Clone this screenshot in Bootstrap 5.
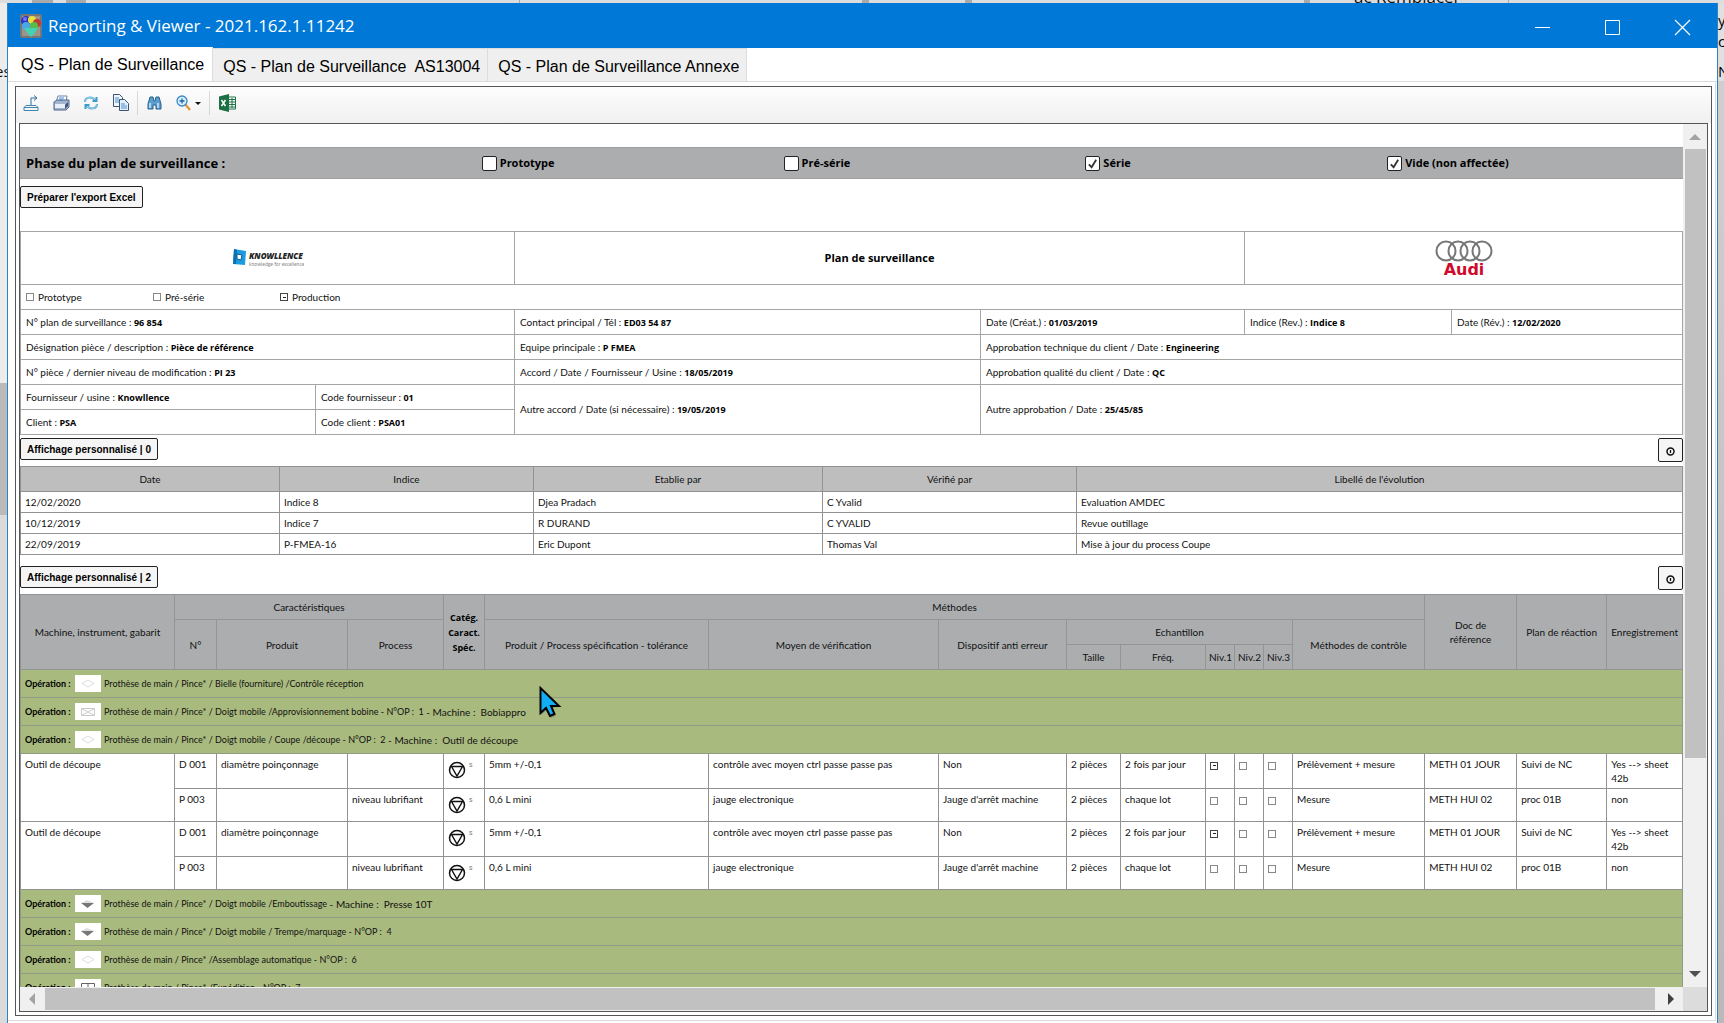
<!DOCTYPE html>
<html lang="fr">
<head>
<meta charset="utf-8">
<meta name="viewport" content="width=device-width, initial-scale=1">
<title>Reporting &amp; Viewer - 2021.162.1.11242</title>
<link href="https://cdn.jsdelivr.net/npm/bootstrap@5.3.0/dist/css/bootstrap.min.css" rel="stylesheet">
<style>
body{font-family:Lato,"Open Sans",sans-serif;font-size:10px;line-height:14px;color:#111;background:#d9d9d9}
button{color:inherit}
.backdrop{inset:0;background:linear-gradient(#dcdcdc 0 3px,#ececec 3px 383px,#bababa 383px 515px,#dadada 515px);font:15px/18px "Open Sans",sans-serif}
.backdrop i{width:12px;height:3px;background:#aaa;top:0}
.backdrop .right-edge{right:0;top:3px;bottom:0;width:6px;background:linear-gradient(#e0e0e0 0 78px,#cfcfcf 78px 110px,#b9b9b9)}
.right-edge div:nth-child(1){padding-top:8px}
.right-edge div:nth-child(2){padding-top:3px}
.right-edge div:nth-child(3){padding-top:12px}
.peek{white-space:nowrap;overflow:hidden}
.peek-top{left:1354px;top:0;width:110px;height:3px;font-size:17px;line-height:12px}
.peek-left{left:-5px;top:62px;width:12px}
.app-window{height:calc(100vh - 3px);margin:3px 6px 0 7px;border:1px solid #2f83c4;border-width:0 1px}
.titlebar{height:45px;background:#0078d7;font:17px/22px "Open Sans",sans-serif}
.titlebar button{width:70px;height:45px}
.tabstrip{height:34px;font:16px/20px "Liberation Sans",Arial,sans-serif;border-bottom:1px solid #dcdcdc}
.tabstrip a{color:#000;text-decoration:none;height:33px;padding:8px 7px 0 10px;background:#efefef;border:1px solid #dcdcdc;border-width:1px 1px 0 0;white-space:pre}
.tabstrip a.active{background:#fff;height:34px;padding:7px 8px 0 13px;border-top-color:#fff}
.tab-body{padding:4px 3px 4px 7px;margin-right:1px;border-right:1px solid #ddd;border-bottom:1px solid #ddd;margin-bottom:2px;min-height:0}
.viewer{border:1px solid #555;padding:0 3px 3px;min-height:0}
.toolbar{height:37px;margin:0 -3px;padding:0 7px 5px;background:linear-gradient(#fdfdfd,#f0f0f0)}
.toolbar button{height:24px;margin-right:14px}
.toolbar .vr{height:24px;align-self:center;color:#777;margin-right:9px}
.toolbar .last-in-group{margin-right:8px}
.pane{border:1px solid #555;display:grid;grid-template:minmax(0,1fr) 24px / minmax(0,1fr) 24px;min-height:0}
.report{overflow:hidden;padding-top:23px}
.track{background:#f0f0f0}
.thumb{background:#c1c1c1}
.vthumb{flex:0 0 70.5%;margin:0 1px 0 2px}
.hthumb{margin:1px 3px 1px 0}
.corner{background:#dcdcdc}
.phase{display:grid;grid-template-columns:456fr 302fr 302fr 302fr 302fr;height:32px;background:#abadaf;border:1px solid #9d9ea0;border-width:1px 0;font:bold 11px/16px "Open Sans",sans-serif;color:#000}
.phase strong{font-size:13px;font-weight:700;padding-left:6px}
.phase label{gap:3px;padding-left:6px}
.tick{appearance:none;margin:0;width:15px;height:15px;border:1px solid #222;border-radius:2px;background:#fff center/11px no-repeat}
.tick:checked{background-image:url("data:image/svg+xml,%3Csvg xmlns='http://www.w3.org/2000/svg' viewBox='0 0 12 12'%3E%3Cpath d='M2 7l3 3 5-8' fill='none' stroke='%23333' stroke-width='2'/%3E%3C/svg%3E")}
.mini{appearance:none;margin:0;width:8px;height:8px;border:1px solid #888;background:#fff center/5px no-repeat;vertical-align:middle}
.mini:checked{border-color:#444;background-image:url("data:image/svg+xml,%3Csvg xmlns='http://www.w3.org/2000/svg' viewBox='0 0 5 5'%3E%3Cpath d='M1 2.5h3' stroke='%23222'/%3E%3C/svg%3E")}
.cmd{border:1px solid #222;border-radius:2px;background:#f5f5f5;font:bold 10px/14px "Liberation Sans",Arial,sans-serif;height:22px;padding:1px 6px 0;color:#000}
.cmd.eye{width:25px;height:24px;padding:2px 0 0}
.export-row{margin:7px 0 23px}
.history-bar{margin:3px 0 4px}
.plan-bar{margin:11px 0 4px}
.grid{width:calc(100% - 1px);table-layout:fixed;border-collapse:collapse;color:#111}
.grid td,.grid th{border:1px solid #929292;height:25px;padding:0 5px;font-weight:400}
.grid b{font:bold 9px/14px "Open Sans",sans-serif;color:#000}
.ident td{border-color:#a5a5a5}
.ident .logos td{height:53px}
.ident .check-item{width:127px}
.grid .sheet-title{font:bold 11px/16px "Open Sans",sans-serif;color:#000}
.history th{background:#bebebe;text-align:center}
.history td{height:21px;padding:0 4px}
.plan th{background:#abadaf;border-color:#939496;text-align:center;padding:0 3px}
.plan td{vertical-align:top;padding:3px 4px;height:33px}
.plan .two td{height:35px}
.plan .op td{height:28px;background:#a9ba7f;border-color:#8f9b83;padding:0 4px;vertical-align:middle}
.grid .op b{width:50px;flex:none;font:bold 9px/14px Lato,sans-serif}
.op svg{background:#fff;margin-right:3px}
.op .path{font-size:9px}
.sup{font:7px/8px "Liberation Sans",sans-serif;color:#777;margin-left:3px}
.ident col:nth-child(1){width:295px}.ident col:nth-child(2){width:199px}.ident col:nth-child(3){width:466px}.ident col:nth-child(4){width:264px}.ident col:nth-child(5){width:207px}.ident col:nth-child(6){width:231px}
.history col:nth-child(1){width:259px}.history col:nth-child(2){width:254px}.history col:nth-child(3){width:289px}.history col:nth-child(4){width:254px}.history col:nth-child(5){width:606px}
.plan col:nth-child(1){width:154px}.plan col:nth-child(2){width:42px}.plan col:nth-child(3){width:131px}.plan col:nth-child(4){width:96px}.plan col:nth-child(5){width:41px}.plan col:nth-child(6){width:224px}.plan col:nth-child(7){width:230px}.plan col:nth-child(8){width:128px}.plan col:nth-child(9){width:54px}.plan col:nth-child(10){width:85px}.plan col:nth-child(11),.plan col:nth-child(12),.plan col:nth-child(13){width:29px}.plan col:nth-child(14){width:132px}.plan col:nth-child(15){width:92px}.plan col:nth-child(16){width:90px}.plan col:nth-child(17){width:76px}
.pointer{left:538px;top:686px}
</style>
<script src="https://cdn.jsdelivr.net/npm/bootstrap@5.3.0/dist/js/bootstrap.bundle.min.js"></script>
</head>
<body class="vh-100 overflow-hidden position-relative">
<svg class="d-none">
<symbol id="diamond" viewBox="0 0 26 17"><path d="M7 8.500L13 5l6 3.500L13 12z" fill="none" stroke="#ddd"/></symbol>
<symbol id="envelope" viewBox="0 0 26 17"><path d="M6.500 5.500h13v7h-13zL19.500 12.500M19.500 5.500l-13 7" fill="none" stroke="#ccc"/></symbol>
<symbol id="gem" viewBox="0 0 26 17"><path d="M6 8l6-3 7 3z" fill="#ddd"/><path d="M6 8h13l-6.500 5z" fill="#777"/></symbol>
<symbol id="crate" viewBox="0 0 26 17"><path d="M6.500 14V4.500h13V14M13 4.500V9" fill="none" stroke="#666"/></symbol>
<symbol id="safety" viewBox="0 0 18 18"><circle cx="9" cy="9" r="7.500" fill="none" stroke="#111" stroke-width="1.500"/><path d="M3.500 5.500h11L9 15z" fill="none" stroke="#111" stroke-width="1.400"/></symbol>
<symbol id="eye" viewBox="0 0 9 9"><path d="M4.500 1C2.500 1 1 2.700 1 4.500S2.500 8 4.500 8 8 6.300 8 4.500 6.500 1 4.500 1z" fill="none" stroke="#111" stroke-width="1.500"/><path d="M4.500 3v3" stroke="#111" stroke-width="1.300"/></symbol>
</svg>

<div class="backdrop position-absolute overflow-hidden" aria-hidden="true">
  <i class="position-absolute" style="left:32px;width:21px"></i><i class="position-absolute" style="left:66px;width:20px"></i><i class="position-absolute" style="left:519px;width:1px"></i><i class="position-absolute" style="left:862px;width:7px"></i><i class="position-absolute" style="left:965px;width:7px"></i><i class="position-absolute" style="left:1304px;width:6px"></i><i class="position-absolute" style="left:1508px;width:1px"></i>
  <div class="peek peek-top position-absolute d-flex align-items-end"><span>ac Remplacer</span></div>
  <div class="peek peek-left position-absolute">es</div>
  <div class="right-edge position-absolute overflow-hidden text-black"><div>y</div><div>c</div><div>N</div></div>
</div>

<div class="app-window position-relative d-flex flex-column bg-white">
  <header class="titlebar d-flex align-items-center text-white">
    <svg class="ms-2 me-1" width="28" height="28" viewBox="0 0 28 28"><rect x="4" y="2" width="22" height="24" rx="2" fill="#777"/><rect x="6" y="4" width="18" height="20" fill="#9a948c"/><circle cx="10" cy="9" r="5" fill="#2636c9"/><circle cx="16" cy="8" r="4" fill="#e8e13b"/><circle cx="21" cy="11" r="4" fill="#c23a35"/><circle cx="10" cy="14" r="4" fill="#48a8e8"/><circle cx="18" cy="14" r="4" fill="#58bb4b"/><path d="M8 16h14l-4 6-3 3-3-3z" fill="#42d4b2"/><circle cx="9" cy="7" r="2" fill="#7e6df0"/></svg>
    <span class="me-auto">Reporting &amp; Viewer - 2021.162.1.11242</span>
    <button type="button" class="btn p-0 border-0 rounded-0" aria-label="Réduire"><svg width="17" height="17"><path d="M1 8.500h15" stroke="#fff"/></svg></button>
    <button type="button" class="btn p-0 border-0 rounded-0" aria-label="Agrandir"><svg width="17" height="17"><path d="M1.500 1.500h14v14h-14z" fill="none" stroke="#fff"/></svg></button>
    <button type="button" class="btn p-0 border-0 rounded-0" aria-label="Fermer"><svg width="17" height="17"><path d="M1 1l15 15M16 1L1 16" stroke="#fff" stroke-width="1.200"/></svg></button>
  </header>
  <nav class="tabstrip d-flex align-items-end">
    <a href="#" class="active">QS - Plan de Surveillance</a><a href="#">QS - Plan de Surveillance  AS13004</a><a href="#">QS - Plan de Surveillance Annexe</a>
  </nav>
  <main class="tab-body flex-grow-1 d-flex flex-column">
    <div class="viewer flex-grow-1 d-flex flex-column">
      <div class="toolbar d-flex align-items-center" role="toolbar">
        <button type="button" class="btn p-0 border-0 d-flex align-items-center" aria-label="Exporter"><svg width="16" height="18" fill="none"><path d="M1 16.500h14v-3l-2-2H3l-2 2zM1 13.500h14" stroke="#3f86b5"/><path d="M8 11V4h5M11 1.500L14 4l-3 2.500" stroke="#2d709f"/></svg></button>
        <button type="button" class="btn p-0 border-0 d-flex align-items-center" aria-label="Imprimer"><svg width="17" height="18"><path d="M5 2h9l-1 6H3z" fill="#fff" stroke="#6c87a5"/><path d="M1 8l3-2h12v7l-3 3H1z" fill="#a3b6cc" stroke="#50698a"/><path d="M2 10h10v4H2z" fill="#e8eff7"/><path d="M6 4h5M6 6h4" stroke="#4585cc"/><path d="M12 11v4l3-3V8z" fill="#3c577b"/></svg></button>
        <button type="button" class="btn p-0 border-0 d-flex align-items-center" aria-label="Actualiser"><svg width="14" height="16" fill="none" stroke="#3a9bcc" stroke-width="2"><path d="M1 7c0-5 7-6 10-2M12.500 2v4h-4M13 9c0 5-7 6-10 2M1.500 14v-4h4"/><path d="M1 7c0-5 7-6 10-2M13 9c0 5-7 6-10 2" stroke="#bfe6f7" stroke-width=".8"/></svg></button>
        <button type="button" class="btn p-0 border-0 d-flex align-items-center last-in-group" aria-label="Copier"><svg width="17" height="19"><path d="M1.500 1.500h6l3 3v9h-9z" fill="#eef5fb" stroke="#3e5570"/><path d="M3 5h4M3 7h6M3 9h6" stroke="#4b8fd0"/><path d="M7.500 6.500h5l4 4v7h-9z" fill="#e3f0fb" stroke="#3e5570"/><path d="M9 11h4M9 13h6M9 15h6" stroke="#4b8fd0"/></svg></button>
        <span class="vr"></span>
        <button type="button" class="btn p-0 border-0 d-flex align-items-center" aria-label="Rechercher"><svg width="15" height="15"><path d="M1 14V9l2-7h3l1 4h1l1-4h3l2 7v5H9v-4H6v4z" fill="#5b9fce" stroke="#27618e"/><path d="M3 8v5M11 8v5" stroke="#cfe6f6" stroke-width="1.500"/></svg></button>
        <button type="button" class="btn p-0 border-0 d-flex align-items-center last-in-group" aria-label="Zoom"><svg width="25" height="18"><path d="M9 10l5 6" stroke="#e39a3e" stroke-width="2.500"/><circle cx="6" cy="7" r="5" fill="#d8effc" stroke="#3988c0" stroke-width="1.300"/><path d="M3.500 7h5M6 4.500v5" stroke="#1c63a8" stroke-width="1.300"/><path d="M19 8h6l-3 3z" fill="#111"/></svg></button>
        <span class="vr"></span>
        <button type="button" class="btn p-0 border-0 d-flex align-items-center" aria-label="Excel"><svg width="17" height="18"><path d="M9 3h7.500v12H9z" fill="#fff" stroke="#217346"/><path d="M10 5.500h6M10 8h6M10 10.500h6M10 13h6M13 4v10" stroke="#217346"/><path d="M0 2.500L10 0v18L0 15.500z" fill="#1c7044"/><path d="M2.500 6l4 6M6.500 6l-4 6" stroke="#fff" stroke-width="1.500"/></svg></button>
      </div>

      <div class="pane flex-grow-1">
        <section class="report">
          <div class="phase align-items-center">
            <strong>Phase du plan de surveillance :</strong>
            <label class="d-flex align-items-center"><input type="checkbox" class="tick">Prototype</label>
            <label class="d-flex align-items-center"><input type="checkbox" class="tick">Pré-série</label>
            <label class="d-flex align-items-center"><input type="checkbox" class="tick" checked>Série</label>
            <label class="d-flex align-items-center"><input type="checkbox" class="tick" checked>Vide (non affectée)</label>
          </div>
          <div class="export-row d-flex"><button type="button" class="cmd">Préparer l'export Excel</button></div>

          <table class="grid ident">
            <colgroup><col><col><col><col><col><col></colgroup>
            <tbody>
            <tr class="logos">
              <td colspan="2" class="text-center"><svg width="72" height="20" viewBox="0 0 72 20" role="img" aria-label="Knowllence"><path d="M2 1l12 2-1 14-12-1z" fill="#1b9be0"/><path d="M2 1l3 1-1 14-3 0z" fill="#0d6fae"/><path d="M5 6l5 1-1 5-4-1z" fill="#fff" stroke="#0b5b95"/><text x="17" y="11" font-family="Open Sans" font-weight="800" font-style="italic" font-size="8" fill="#222">KNOWLLENCE</text><text x="17" y="18" font-family="Lato" font-size="5" fill="#888">knowledge for excellence</text></svg></td>
              <td colspan="2" class="sheet-title text-center">Plan de surveillance</td>
              <td colspan="2" class="text-center"><svg width="58" height="38" viewBox="0 0 58 38" role="img" aria-label="Audi"><g fill="none" stroke="#777" stroke-width="2"><circle cx="11" cy="12" r="9.500"/><circle cx="23" cy="12" r="9.500"/><circle cx="35" cy="12" r="9.500"/><circle cx="47" cy="12" r="9.500"/></g><text x="29" y="36" text-anchor="middle" font-family="DejaVu Sans" font-weight="700" font-size="16" fill="#cf0a2c">Audi</text></svg></td>
            </tr>
            <tr><td colspan="6"><div class="d-flex">
              <label class="check-item d-flex align-items-center gap-1"><input type="checkbox" class="mini">Prototype</label>
              <label class="check-item d-flex align-items-center gap-1"><input type="checkbox" class="mini">Pré-série</label>
              <label class="check-item d-flex align-items-center gap-1"><input type="checkbox" class="mini" checked>Production</label></div></td></tr>
            <tr><td colspan="2">N° plan de surveillance : <b>96 854</b></td><td>Contact principal / Tél : <b>ED03 54 87</b></td><td>Date (Créat.) : <b>01/03/2019</b></td><td>Indice (Rev.) : <b>Indice 8</b></td><td>Date (Rév.) : <b>12/02/2020</b></td></tr>
            <tr><td colspan="2">Désignation pièce / description : <b>Pièce de référence</b></td><td>Equipe principale : <b>P FMEA</b></td><td colspan="3">Approbation technique du client / Date : <b>Engineering</b></td></tr>
            <tr><td colspan="2">N° pièce / dernier niveau de modification : <b>PI 23</b></td><td>Accord / Date / Fournisseur / Usine : <b>18/05/2019</b></td><td colspan="3">Approbation qualité du client / Date : <b>QC</b></td></tr>
            <tr><td>Fournisseur / usine : <b>Knowllence</b></td><td>Code fournisseur : <b>01</b></td><td rowspan="2">Autre accord / Date (si nécessaire) : <b>19/05/2019</b></td><td colspan="3" rowspan="2">Autre approbation / Date : <b>25/45/85</b></td></tr>
            <tr><td>Client : <b>PSA</b></td><td>Code client : <b>PSA01</b></td></tr>
            </tbody>
          </table>

          <div class="history-bar d-flex justify-content-between align-items-start"><button type="button" class="cmd">Affichage personnalisé | 0</button><button type="button" class="cmd eye" aria-label="Afficher"><svg width="9" height="9"><use href="#eye"/></svg></button></div>
          <table class="grid history">
            <colgroup><col><col><col><col><col></colgroup>
            <thead><tr><th>Date</th><th>Indice</th><th>Etablie par</th><th>Vérifié par</th><th>Libellé de l'évolution</th></tr></thead>
            <tbody>
            <tr><td>12/02/2020</td><td>Indice 8</td><td>Djea Pradach</td><td>C Yvalid</td><td>Evaluation AMDEC</td></tr>
            <tr><td>10/12/2019</td><td>Indice 7</td><td>R DURAND</td><td>C YVALID</td><td>Revue outillage</td></tr>
            <tr><td>22/09/2019</td><td>P-FMEA-16</td><td>Eric Dupont</td><td>Thomas Val</td><td>Mise à jour du process Coupe</td></tr>
            </tbody>
          </table>

          <div class="plan-bar d-flex justify-content-between align-items-start"><button type="button" class="cmd">Affichage personnalisé | 2</button><button type="button" class="cmd eye" aria-label="Afficher"><svg width="9" height="9"><use href="#eye"/></svg></button></div>
          <table class="grid plan">
            <colgroup><col><col><col><col><col><col><col><col><col><col><col><col><col><col><col><col><col></colgroup>
            <thead>
            <tr><th rowspan="3">Machine, instrument, gabarit</th><th colspan="3">Caractéristiques</th><th rowspan="3"><b>Catég.<br>Caract.<br>Spéc.</b></th><th colspan="9">Méthodes</th><th rowspan="3">Doc de<br>référence</th><th rowspan="3">Plan de réaction</th><th rowspan="3">Enregistrement</th></tr>
            <tr><th rowspan="2">N°</th><th rowspan="2">Produit</th><th rowspan="2">Process</th><th rowspan="2">Produit / Process spécification - tolérance</th><th rowspan="2">Moyen de vérification</th><th rowspan="2">Dispositif anti erreur</th><th colspan="5">Echantillon</th><th rowspan="2">Méthodes de contrôle</th></tr>
            <tr><th>Taille</th><th>Fréq.</th><th>Niv.1</th><th>Niv.2</th><th>Niv.3</th></tr>
            </thead>
            <tbody>
            <tr class="op"><td colspan="17"><div class="d-flex align-items-center"><b>Opération :</b><svg width="26" height="17"><use href="#diamond"/></svg><span class="path">Prothèse de main / Pince* / Bielle (fourniture) /Contrôle réception</span></div></td></tr>
            <tr class="op"><td colspan="17"><div class="d-flex align-items-center"><b>Opération :</b><svg width="26" height="17"><use href="#envelope"/></svg><span class="path">Prothèse de main / Pince* / Doigt mobile /Approvisionnement bobine - N°OP :&nbsp; 1</span><span>&nbsp;- Machine :&nbsp; Bobiappro</span></div></td></tr>
            <tr class="op"><td colspan="17"><div class="d-flex align-items-center"><b>Opération :</b><svg width="26" height="17"><use href="#diamond"/></svg><span class="path">Prothèse de main / Pince* / Doigt mobile / Coupe /découpe - N°OP :&nbsp; 2</span><span>&nbsp;- Machine :&nbsp; Outil de découpe</span></div></td></tr>
            <tr class="two"><td rowspan="2">Outil de découpe</td><td>D 001</td><td>diamètre poinçonnage</td><td></td><td><div class="d-flex pt-1"><svg width="18" height="18"><use href="#safety"/></svg><span class="sup">s</span></div></td><td>5mm +/-0,1</td><td>contrôle avec moyen ctrl passe passe pas</td><td>Non</td><td>2 pièces</td><td>2 fois par jour</td><td><input type="checkbox" class="mini" aria-label="Niv.1" checked></td><td><input type="checkbox" class="mini" aria-label="Niv.2"></td><td><input type="checkbox" class="mini" aria-label="Niv.3"></td><td>Prélèvement + mesure</td><td>METH 01 JOUR</td><td>Suivi de NC</td><td>Yes --&gt; sheet<br>42b</td></tr>
            <tr><td>P 003</td><td></td><td>niveau lubrifiant</td><td><div class="d-flex pt-1"><svg width="18" height="18"><use href="#safety"/></svg><span class="sup">s</span></div></td><td>0,6 L mini</td><td>jauge electronique</td><td>Jauge d'arrêt machine</td><td>2 pièces</td><td>chaque lot</td><td><input type="checkbox" class="mini" aria-label="Niv.1"></td><td><input type="checkbox" class="mini" aria-label="Niv.2"></td><td><input type="checkbox" class="mini" aria-label="Niv.3"></td><td>Mesure</td><td>METH HUI 02</td><td>proc 01B</td><td>non</td></tr>
            <tr class="two"><td rowspan="2">Outil de découpe</td><td>D 001</td><td>diamètre poinçonnage</td><td></td><td><div class="d-flex pt-1"><svg width="18" height="18"><use href="#safety"/></svg><span class="sup">s</span></div></td><td>5mm +/-0,1</td><td>contrôle avec moyen ctrl passe passe pas</td><td>Non</td><td>2 pièces</td><td>2 fois par jour</td><td><input type="checkbox" class="mini" aria-label="Niv.1" checked></td><td><input type="checkbox" class="mini" aria-label="Niv.2"></td><td><input type="checkbox" class="mini" aria-label="Niv.3"></td><td>Prélèvement + mesure</td><td>METH 01 JOUR</td><td>Suivi de NC</td><td>Yes --&gt; sheet<br>42b</td></tr>
            <tr><td>P 003</td><td></td><td>niveau lubrifiant</td><td><div class="d-flex pt-1"><svg width="18" height="18"><use href="#safety"/></svg><span class="sup">s</span></div></td><td>0,6 L mini</td><td>jauge electronique</td><td>Jauge d'arrêt machine</td><td>2 pièces</td><td>chaque lot</td><td><input type="checkbox" class="mini" aria-label="Niv.1"></td><td><input type="checkbox" class="mini" aria-label="Niv.2"></td><td><input type="checkbox" class="mini" aria-label="Niv.3"></td><td>Mesure</td><td>METH HUI 02</td><td>proc 01B</td><td>non</td></tr>
            <tr class="op"><td colspan="17"><div class="d-flex align-items-center"><b>Opération :</b><svg width="26" height="17"><use href="#gem"/></svg><span class="path">Prothèse de main / Pince* / Doigt mobile /Emboutissage</span><span>&nbsp;- Machine :&nbsp; Presse 10T</span></div></td></tr>
            <tr class="op"><td colspan="17"><div class="d-flex align-items-center"><b>Opération :</b><svg width="26" height="17"><use href="#gem"/></svg><span class="path">Prothèse de main / Pince* / Doigt mobile / Trempe/marquage - N°OP :&nbsp; 4</span></div></td></tr>
            <tr class="op"><td colspan="17"><div class="d-flex align-items-center"><b>Opération :</b><svg width="26" height="17"><use href="#diamond"/></svg><span class="path">Prothèse de main / Pince* /Assemblage automatique - N°OP :&nbsp; 6</span></div></td></tr>
            <tr class="op"><td colspan="17"><div class="d-flex align-items-center"><b>Opération :</b><svg width="26" height="17"><use href="#crate"/></svg><span class="path">Prothèse de main / Pince* /Expédition - N°OP :&nbsp; 7</span></div></td></tr>
            </tbody>
          </table>
        </section>
        <div class="track d-flex flex-column" aria-hidden="true">
          <svg width="24" height="25" class="flex-shrink-0"><path d="M6 16h12l-6-6z" fill="#a3a3a3"/></svg>
          <div class="thumb vthumb"></div>
          <svg width="24" height="25" class="mt-auto flex-shrink-0"><path d="M6 9h12l-6 6z" fill="#505050"/></svg>
        </div>
        <div class="track d-flex" aria-hidden="true">
          <svg width="25" height="24" class="flex-shrink-0"><path d="M15 6v12l-6-6z" fill="#a3a3a3"/></svg>
          <div class="thumb hthumb flex-grow-1"></div>
          <svg width="25" height="24" class="flex-shrink-0"><path d="M10 6v12l6-6z" fill="#404040"/></svg>
        </div>
        <div class="corner"></div>
      </div>
    </div>
  </main>
</div>
<svg class="pointer position-absolute" width="26" height="36" viewBox="0 0 26 36" aria-hidden="true"><path d="M3 3v26l6-5 4 8 5-2-4-8 8-1z" fill="#555" opacity=".35"/><path d="M2.500 2v25l5.500-5 4 8 4.500-2-3.500-8h8z" fill="#12aef5" stroke="#000" stroke-width="2"/></svg>
</body>
</html>
